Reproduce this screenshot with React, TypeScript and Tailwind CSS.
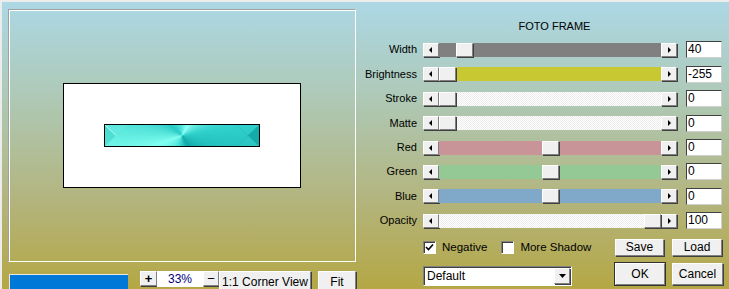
import React from "react";

const raised =
  "border border-t-white border-l-white border-r-[#808080] border-b-[#808080] shadow-[1px_1px_0_#404040] bg-[#f0f0f0]";

function Arrow({ dir }: { dir: "l" | "r" }) {
  return (
    <div className={`w-[16px] h-[14px] shrink-0 flex items-center justify-center box-border ${raised}`}>
      <svg width="4" height="6" viewBox="0 0 4 6">
        {dir === "l" ? <path d="M3 0 L3 6 L0 3 Z" fill="#000" /> : <path d="M1 0 L1 6 L4 3 Z" fill="#000" />}
      </svg>
    </div>
  );
}

type Row = { label: string; value: string; bg: string; pos: number };

const rows: Row[] = [
  { label: "Width", value: "40", bg: "bg-[#808080]", pos: 17 },
  { label: "Brightness", value: "-255", bg: "bg-[#c8c832]", pos: 0 },
  { label: "Stroke", value: "0", bg: "checker", pos: 0 },
  { label: "Matte", value: "0", bg: "checker", pos: 0 },
  { label: "Red", value: "0", bg: "bg-[#c89498]", pos: 103 },
  { label: "Green", value: "0", bg: "bg-[#94c894]", pos: 103 },
  { label: "Blue", value: "0", bg: "bg-[#80a8c8]", pos: 103 },
  { label: "Opacity", value: "100", bg: "checker", pos: 205 },
];

function Slider({ r }: { r: Row }) {
  const bg =
    r.bg === "checker"
      ? "bg-[repeating-conic-gradient(#ececec_0_25%,#ffffff_0_50%)] bg-[length:2px_2px]"
      : r.bg;
  return (
    <div className="flex items-center h-[24.4px]">
      <div className="w-[61px] text-right text-[11px] leading-none text-black">{r.label}</div>
      <div className="ml-[6px] w-[254px] h-[14px] flex">
        <Arrow dir="l" />
        <div className={`relative flex-1 h-[14px] ${bg}`}>
          <div
            className={`absolute top-0 w-[17px] h-[14px] box-border ${raised}`}
            style={{ left: r.pos }}
          />
        </div>
        <Arrow dir="r" />
      </div>
      <div className="ml-[9px] w-[36px] h-[17px] box-border bg-white border border-t-[#404040] border-l-[#404040] border-r-[#d0d0d0] border-b-[#d0d0d0] text-[12px] leading-[15px] pl-[1px] text-black">
        {r.value}
      </div>
    </div>
  );
}

function Btn({ children, w, h, cls = "" }: { children: React.ReactNode; w: string; h: string; cls?: string }) {
  return (
    <div className={`${w} ${h} shrink-0 box-border flex items-center justify-center text-[12px] text-black ${raised} ${cls}`}>
      {children}
    </div>
  );
}

function Check({ checked }: { checked: boolean }) {
  return (
    <div className="w-[13px] h-[13px] shrink-0 box-border bg-white border border-t-[#808080] border-l-[#808080] border-r-white border-b-white shadow-[inset_1px_1px_0_#404040] flex items-center justify-center">
      {checked && (
        <svg width="9" height="9" viewBox="0 0 9 9">
          <path d="M1 4 L3.5 6.5 L8 1.5" stroke="#000" strokeWidth="1.6" fill="none" />
        </svg>
      )}
    </div>
  );
}

export default function App() {
  return (
    <div
      className="relative w-[729px] h-[289px] overflow-hidden flex bg-[linear-gradient(180deg,#acd8e6_0%,#aec8b4_35%,#b3b47c_70%,#b4a744_100%)] shadow-[inset_2px_2px_0_#ececec]"
      style={{ fontFamily: '"Liberation Sans", Arial, sans-serif' }}
    >
      {/* left column */}
      <div className="w-[356px] shrink-0 flex flex-col pl-[8px] pt-[9px]">
        <div className="w-[348px] h-[253px] shrink-0 box-border border border-t-[#a0a0a0] border-l-[#a0a0a0] border-r-white border-b-white shadow-[inset_1px_1px_0_#ffffff] flex items-center justify-center">
          <div className="w-[238px] h-[105px] box-border bg-white border border-black flex items-center justify-center">
            <div className="relative w-[156px] h-[23px] box-border border border-black overflow-hidden bg-[conic-gradient(from_0deg_at_50%_50%,#50e8e0_0deg,#90fff4_30deg,#30d0cc_80deg,#10a8a8_150deg,#48e0d8_200deg,#80fff0_250deg,#28c8c4_310deg,#50e8e0_360deg)]">
              <svg className="absolute left-0 top-0" width="22" height="21" viewBox="0 0 22 21">
                <path d="M0 0 L11 10.5 L0 21 Z" fill="#40d4cc" opacity="0.6" />
                <path d="M0 0 L11 10.5 L22 0 Z" fill="#70ece4" opacity="0.35" />
                <path d="M0 0 L11 10.5" stroke="#c8fff8" strokeWidth="0.8" />
              </svg>
              <svg className="absolute right-0 top-0" width="22" height="21" viewBox="0 0 22 21">
                <path d="M22 0 L11 10.5 L22 21 Z" fill="#0a9c9c" opacity="0.7" />
                <path d="M0 21 L11 10.5 L22 21 Z" fill="#30c8c0" opacity="0.4" />
                <path d="M0 0 L22 21 M22 0 L0 21" stroke="#20b0ac" strokeWidth="0.6" opacity="0.6" />
              </svg>
            </div>
          </div>
        </div>
        <div className="flex items-start shrink-0">
          <div className="mt-[12px] ml-[1px] w-[119px] h-[20px] shrink-0 box-border bg-[#0078d7] border-t border-l border-[#e8e8e8]" />
          <div className="ml-[12px] mt-[9px] flex items-start">
            <Btn w="w-[17px]" h="h-[15px]" cls="font-bold text-[13px]">+</Btn>
            <div className="w-[46px] h-[16px] shrink-0 bg-white text-[#000080] text-[12px] leading-[16px] text-center">33%</div>
            <Btn w="w-[16px]" h="h-[15px]" cls="text-[13px]">−</Btn>
            <Btn w="w-[92px]" h="h-[22px]" cls="items-start pt-[1px] text-[12.5px]">1:1 Corner View</Btn>
            <Btn w="w-[38px]" h="h-[22px]" cls="ml-[7px] items-start pt-[1px] text-[12.5px]">Fit</Btn>
          </div>
        </div>
      </div>

      {/* right column */}
      <div className="flex flex-col pt-[18px]">
        <div className="ml-[67px] w-[263px] h-[16px] text-center text-[11px] leading-[16px] text-black">FOTO FRAME</div>
        <div className="mt-[3.8px] flex flex-col">
          {rows.map((r) => (
            <Slider key={r.label} r={r} />
          ))}
        </div>
        <div className="flex">
          <div className="ml-[67px] w-[192px] flex flex-col pt-[8px]">
            <div className="flex items-center h-[13px] text-[11.5px] text-black">
              <Check checked />
              <span className="ml-[6px]">Negative</span>
              <div className="ml-[14px]">
                <Check checked={false} />
              </div>
              <span className="ml-[6px]">More Shadow</span>
            </div>
            <div className="mt-[12px] w-[149px] h-[20px] box-border bg-white border border-t-[#808080] border-l-[#808080] border-r-white border-b-white shadow-[inset_1px_1px_0_#404040] flex items-center pl-[3px] text-[12px] text-black">
              <span className="flex-1">Default</span>
              <div className={`w-[16px] h-[16px] mr-[1px] box-border flex items-center justify-center ${raised}`}>
                <svg width="7" height="4" viewBox="0 0 7 4">
                  <path d="M0 0 L7 0 L3.5 4 Z" fill="#000" />
                </svg>
              </div>
            </div>
          </div>
          <div className="flex flex-col pt-[6px]">
            <div className="flex gap-[8px]">
              <Btn w="w-[49px]" h="h-[17px]">Save</Btn>
              <Btn w="w-[50px]" h="h-[17px]">Load</Btn>
            </div>
            <div className="mt-[7px] flex gap-[7px]">
              <Btn w="w-[50px]" h="h-[22px]" cls="outline outline-1 outline-[#303030]">OK</Btn>
              <Btn w="w-[51px]" h="h-[22px]">Cancel</Btn>
            </div>
          </div>
        </div>
      </div>
    </div>
  );
}
